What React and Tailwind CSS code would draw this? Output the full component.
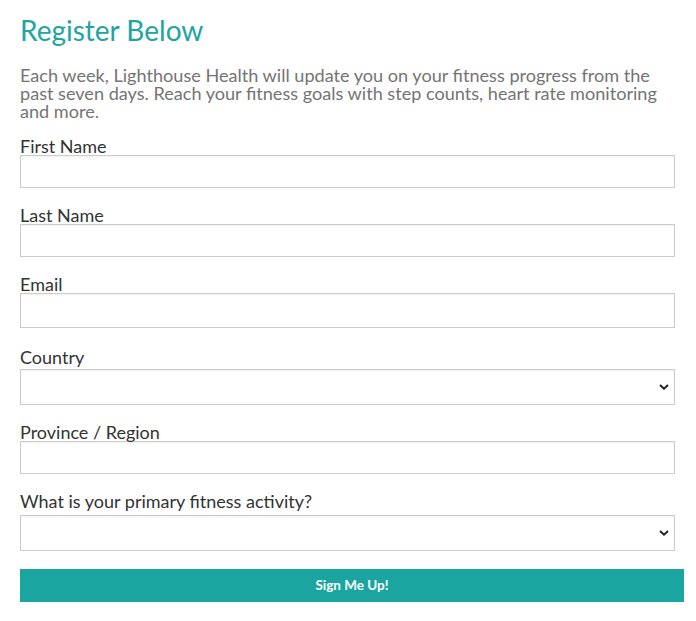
export default function App() {
  const font = { fontFamily: "Lato, 'Open Sans', sans-serif" };

  return (
    <div className="min-h-screen bg-white px-5 pt-3 font-['Lato',sans-serif]">
      <h1 className="text-[28px] leading-[36px] text-[#22a59f]">Register Below</h1>

      <p className="mt-[18px] w-[660px] text-[18.1px] leading-[18px] text-[#747474]">
        Each week, Lighthouse Health will update you on your fitness progress from the
        past seven days. Reach your fitness goals with step counts, heart rate monitoring
        and more.
      </p>

      <form className="w-[655px]" onSubmit={(e) => e.preventDefault()}>
        <label className="mt-[17px] block text-[18px] leading-[18px] text-[#333]">First Name</label>
        <input type="text" className="block h-[33px] w-full border border-[#ccc] shadow-[inset_0_1px_2px_rgba(0,0,0,0.06)]" />

        <label className="mt-[18px] block text-[18px] leading-[18px] text-[#333]">Last Name</label>
        <input type="text" className="block h-[33px] w-full border border-[#ccc] shadow-[inset_0_1px_2px_rgba(0,0,0,0.06)]" />

        <label className="mt-[18px] block text-[18px] leading-[18px] text-[#333]">Email</label>
        <input type="email" className="block h-[35px] w-full border border-[#ccc] shadow-[inset_0_1px_2px_rgba(0,0,0,0.06)]" />

        <label className="mt-[20px] block text-[18px] leading-[18px] text-[#333]">Country</label>
        <div className="relative mt-[3px]">
          <select className="block h-[36px] w-full appearance-none border border-[#ccc] bg-white shadow-[inset_0_1px_2px_rgba(0,0,0,0.06)]">
            <option></option>
          </select>
          <Chevron />
        </div>

        <label className="mt-[18px] block text-[18px] leading-[18px] text-[#333]">Province / Region</label>
        <input type="text" className="block h-[33px] w-full border border-[#ccc] shadow-[inset_0_1px_2px_rgba(0,0,0,0.06)]" />

        <label className="mt-[18px] block text-[18px] leading-[18px] text-[#333]">What is your primary fitness activity?</label>
        <div className="relative mt-[5px]">
          <select className="block h-[36px] w-full appearance-none border border-[#ccc] bg-white shadow-[inset_0_1px_2px_rgba(0,0,0,0.06)]">
            <option></option>
          </select>
          <Chevron />
        </div>

        <button
          type="submit"
          className="mt-[18px] block h-[33px] w-[664px] bg-[#1aa5a0] text-[13.5px] font-bold text-white"
          style={font}
        >
          Sign Me Up!
        </button>
      </form>
    </div>
  );
}

function Chevron() {
  return (
    <svg
      className="pointer-events-none absolute right-[6px] top-1/2 -translate-y-1/2"
      width="10"
      height="7"
      viewBox="0 0 10 7"
    >
      <path d="M1 1.5 L5 5.2 L9 1.5" fill="none" stroke="#222" strokeWidth="2" />
    </svg>
  );
}
